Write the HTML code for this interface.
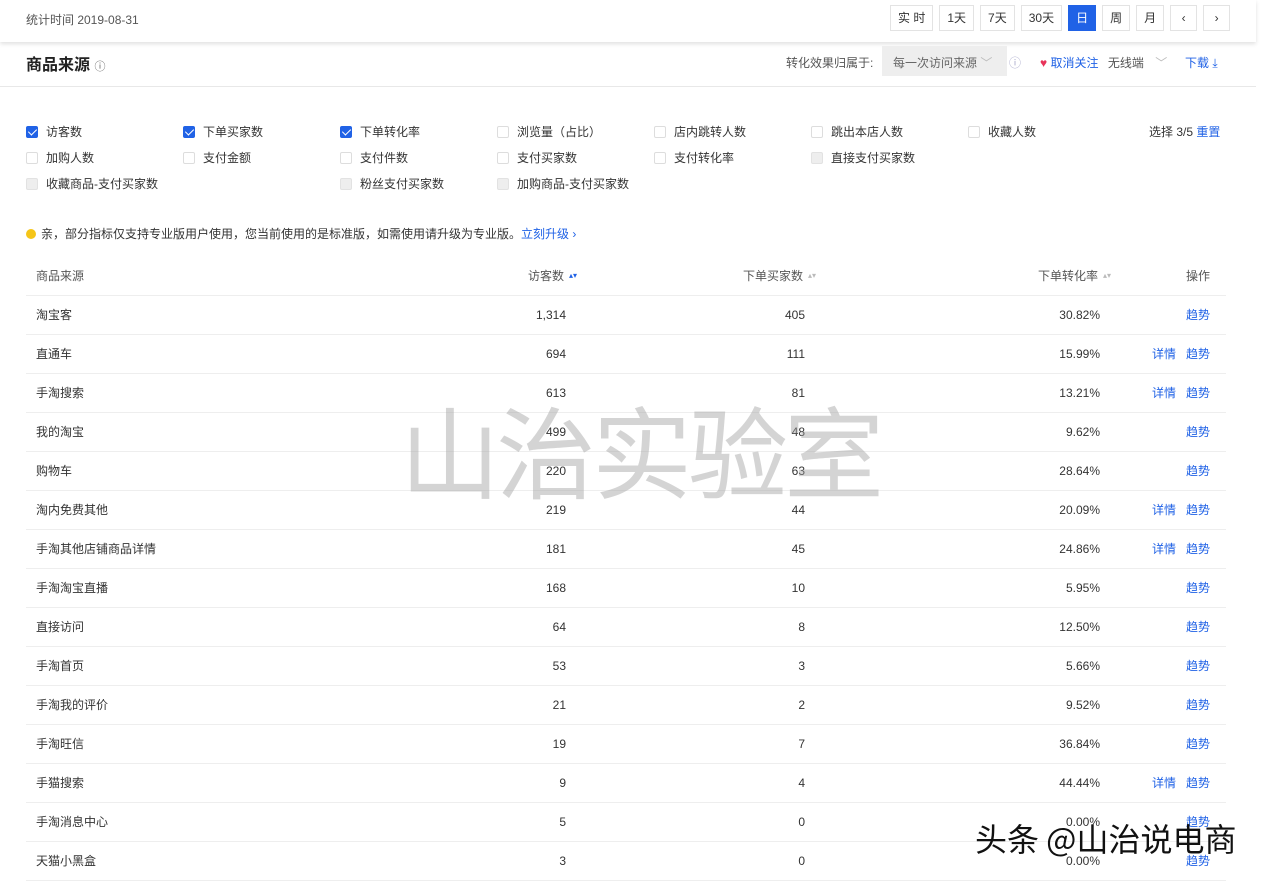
<!DOCTYPE html>
<html><head><meta charset="utf-8"><style>
*{margin:0;padding:0;box-sizing:border-box}
body{width:1263px;height:881px;overflow:hidden;background:#fff;font-family:"Liberation Sans","Noto Sans CJK SC",sans-serif;font-size:12px;color:#333;position:relative}
.top{position:absolute;left:0;top:0;width:1256px;height:42px;background:#fff;box-shadow:0 2px 4px rgba(0,0,0,.12)}
.top .t{position:absolute;left:26px;top:11px;color:#555}
.btns{position:absolute;left:890px;top:5px;display:flex;gap:6px}
.btns span{height:26px;border:1px solid #e3e3e3;padding:0 7px;line-height:24px;color:#333;font-size:12px;min-width:27px;text-align:center}
.btns span.on{background:#2062e6;color:#fff;border-color:#2062e6}
.hd{position:absolute;left:0;top:42px;width:1256px;height:45px;border-bottom:1px solid #e8e8e8}
.hd h2{position:absolute;left:26px;top:9px;font-size:16px;font-weight:bold;color:#222}
.hd .r{position:absolute;top:12px;font-size:12px}
.blue{color:#2062e6}
.cb{position:absolute;font-size:12px;color:#333}
.cb i{display:inline-block;width:12px;height:12px;border:1px solid #ddd;border-radius:2px;vertical-align:-2px;margin-right:8px;background:#fff}
.cb i.c{background:#2062e6;border-color:#2062e6;position:relative}
.cb i.c:after{content:"";position:absolute;left:3px;top:0px;width:4px;height:7px;border:solid #fff;border-width:0 1.5px 1.5px 0;transform:rotate(45deg)}
.cb i.d{background:#eee;border-color:#e2e2e2}
.note{position:absolute;left:26px;top:225px;font-size:12px;color:#333}
.note b{display:inline-block;width:10px;height:10px;border-radius:50%;background:#f5c518;vertical-align:-1px;margin-right:5px}
.row{position:absolute;left:26px;width:1200px;height:39px;border-bottom:1px solid #eee;line-height:38px}
.row span{position:absolute;white-space:nowrap}
.row .n{left:10px}
.row .a{right:660px}
.row .b{right:421px}
.row .c{right:126px}
.row .d{left:1126px;color:#2062e6}
.row .e{left:1160px;color:#2062e6}
.hr{color:#555}
.sort{color:#bbb;font-size:8px;margin-left:5px}
.wm{position:absolute;left:400px;top:388px;font-size:100px;color:rgba(160,160,160,.45);font-family:"Noto Sans CJK SC",sans-serif;letter-spacing:-4px;line-height:1.2;white-space:nowrap}
.tt{position:absolute;left:975px;top:815px;font-size:32px;color:#111;font-family:"Noto Sans CJK SC",sans-serif;white-space:nowrap}
</style></head><body>
<div class="top"><span class="t">统计时间 2019-08-31</span>
<div class="btns"><span>实 时</span><span>1天</span><span>7天</span><span>30天</span><span class="on">日</span><span>周</span><span>月</span><span>‹</span><span>›</span></div></div>
<div class="hd"><h2>商品来源 <span style="font-size:11px;font-weight:normal;color:#666">ⓘ</span></h2>
<span class="r" style="left:786px;color:#555">转化效果归属于:</span>
<span style="position:absolute;left:882px;top:4px;width:125px;height:30px;background:#eee;color:#666;padding:8px 11px;font-size:12px;white-space:nowrap">每一次访问来源 <span style="color:#bbb">﹀</span></span>
<span class="r" style="left:1009px;color:#aac">ⓘ</span>
<span class="r" style="left:1040px;white-space:nowrap"><span style="color:#e8345a">♥</span> <span class="blue">取消关注</span> <span style="color:#555;margin-left:6px">无线端</span> <span style="color:#bbb;margin-left:8px">﹀</span></span>
<span class="r blue" style="left:1185px">下载 ⤓</span></div>

<div class="cb" style="left:26px;top:123px"><i class="c"></i>访客数</div>
<div class="cb" style="left:183px;top:123px"><i class="c"></i>下单买家数</div>
<div class="cb" style="left:340px;top:123px"><i class="c"></i>下单转化率</div>
<div class="cb" style="left:497px;top:123px"><i></i>浏览量（占比）</div>
<div class="cb" style="left:654px;top:123px"><i></i>店内跳转人数</div>
<div class="cb" style="left:811px;top:123px"><i></i>跳出本店人数</div>
<div class="cb" style="left:968px;top:123px"><i></i>收藏人数</div>
<div class="cb" style="left:1149px;top:123px">选择 3/5 <span class="blue">重置</span></div>
<div class="cb" style="left:26px;top:149px"><i></i>加购人数</div>
<div class="cb" style="left:183px;top:149px"><i></i>支付金额</div>
<div class="cb" style="left:340px;top:149px"><i></i>支付件数</div>
<div class="cb" style="left:497px;top:149px"><i></i>支付买家数</div>
<div class="cb" style="left:654px;top:149px"><i></i>支付转化率</div>
<div class="cb" style="left:811px;top:149px"><i class="d"></i>直接支付买家数</div>
<div class="cb" style="left:26px;top:175px"><i class="d"></i>收藏商品-支付买家数</div>
<div class="cb" style="left:340px;top:175px"><i class="d"></i>粉丝支付买家数</div>
<div class="cb" style="left:497px;top:175px"><i class="d"></i>加购商品-支付买家数</div>
<div class="note"><b></b>亲，部分指标仅支持专业版用户使用，您当前使用的是标准版，如需使用请升级为专业版。<span class="blue">立刻升级 ›</span></div>

<div class="row hr" style="top:257px"><span class="n">商品来源</span><span style="left:502px">访客数<span class="sort" style="color:#2062e6">▴▾</span></span><span style="left:717px">下单买家数<span class="sort">▴▾</span></span><span style="left:1012px">下单转化率<span class="sort">▴▾</span></span><span style="left:1160px">操作</span></div>
<div class="row" style="top:296px"><span class="n">淘宝客</span><span class="a">1,314</span><span class="b">405</span><span class="c">30.82%</span><span class="e">趋势</span></div>
<div class="row" style="top:335px"><span class="n">直通车</span><span class="a">694</span><span class="b">111</span><span class="c">15.99%</span><span class="d">详情</span><span class="e">趋势</span></div>
<div class="row" style="top:374px"><span class="n">手淘搜索</span><span class="a">613</span><span class="b">81</span><span class="c">13.21%</span><span class="d">详情</span><span class="e">趋势</span></div>
<div class="row" style="top:413px"><span class="n">我的淘宝</span><span class="a">499</span><span class="b">48</span><span class="c">9.62%</span><span class="e">趋势</span></div>
<div class="row" style="top:452px"><span class="n">购物车</span><span class="a">220</span><span class="b">63</span><span class="c">28.64%</span><span class="e">趋势</span></div>
<div class="row" style="top:491px"><span class="n">淘内免费其他</span><span class="a">219</span><span class="b">44</span><span class="c">20.09%</span><span class="d">详情</span><span class="e">趋势</span></div>
<div class="row" style="top:530px"><span class="n">手淘其他店铺商品详情</span><span class="a">181</span><span class="b">45</span><span class="c">24.86%</span><span class="d">详情</span><span class="e">趋势</span></div>
<div class="row" style="top:569px"><span class="n">手淘淘宝直播</span><span class="a">168</span><span class="b">10</span><span class="c">5.95%</span><span class="e">趋势</span></div>
<div class="row" style="top:608px"><span class="n">直接访问</span><span class="a">64</span><span class="b">8</span><span class="c">12.50%</span><span class="e">趋势</span></div>
<div class="row" style="top:647px"><span class="n">手淘首页</span><span class="a">53</span><span class="b">3</span><span class="c">5.66%</span><span class="e">趋势</span></div>
<div class="row" style="top:686px"><span class="n">手淘我的评价</span><span class="a">21</span><span class="b">2</span><span class="c">9.52%</span><span class="e">趋势</span></div>
<div class="row" style="top:725px"><span class="n">手淘旺信</span><span class="a">19</span><span class="b">7</span><span class="c">36.84%</span><span class="e">趋势</span></div>
<div class="row" style="top:764px"><span class="n">手猫搜索</span><span class="a">9</span><span class="b">4</span><span class="c">44.44%</span><span class="d">详情</span><span class="e">趋势</span></div>
<div class="row" style="top:803px"><span class="n">手淘消息中心</span><span class="a">5</span><span class="b">0</span><span class="c">0.00%</span><span class="e">趋势</span></div>
<div class="row" style="top:842px"><span class="n">天猫小黑盒</span><span class="a">3</span><span class="b">0</span><span class="c">0.00%</span><span class="e">趋势</span></div>
<div class="wm">山治实验室</div>
<div class="tt">头条 @山治说电商</div>
</body></html>
